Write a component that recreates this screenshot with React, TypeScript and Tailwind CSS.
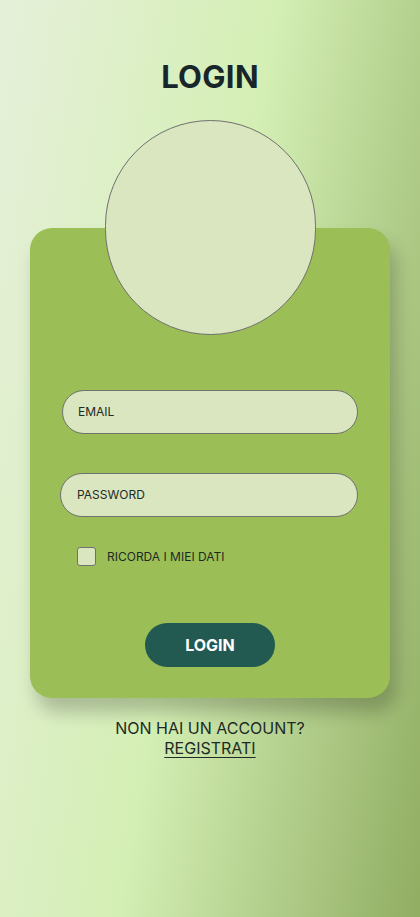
import React from "react";

export default function App() {
  return (
    <div
      className="min-h-[917px] w-full flex flex-col items-center bg-[linear-gradient(100deg,#e6f0da_0%,#d4efb4_48%,#90ad62_100%)] [font-family:Inter,'Noto_Sans',sans-serif] text-[#1d2a26]"
    >
      <h1 className="mt-[59px] text-[31px] leading-[36px] font-bold text-[#17262a] tracking-[0.3px]">LOGIN</h1>
      <div className="mt-[25px] w-[211px] h-[215px] rounded-full bg-[#dae6bf] border border-[#707070] relative z-10 mb-[-107px]" />
      <div className="w-[360px] h-[470px] rounded-[22px] bg-[#9bbf56] shadow-[6px_14px_18px_rgba(0,0,0,0.22)] flex flex-col pt-[162px]">
        <div className="ml-[32px] w-[296px] h-[44px] rounded-full bg-[#dae6bf] border border-[#707070] flex items-center pl-[15px] text-[12px] text-[#1e2a26]">
          EMAIL
        </div>
        <div className="ml-[30px] mt-[39px] w-[298px] h-[44px] rounded-full bg-[#dae6bf] border border-[#707070] flex items-center pl-[16px] text-[12px] text-[#1e2a26]">
          PASSWORD
        </div>
        <div className="ml-[47px] mt-[30px] flex items-center">
          <div className="w-[19px] h-[19px] rounded-[3px] bg-[#dae6bf] border border-[#707070]" />
          <span className="ml-[11px] text-[12px] text-[#1e2a26]">RICORDA I MIEI DATI</span>
        </div>
        <div className="mt-[57px] self-center w-[130px] h-[44px] rounded-full bg-[#225a51] flex items-center justify-center text-white font-bold text-[16px]">
          LOGIN
        </div>
      </div>
      <div className="mt-[20px] flex flex-col items-center text-[16px] leading-[20px] text-[#1d2a26]">
        <span>NON HAI UN ACCOUNT?</span>
        <span className="underline underline-offset-[3px]">REGISTRATI</span>
      </div>
    </div>
  );
}
